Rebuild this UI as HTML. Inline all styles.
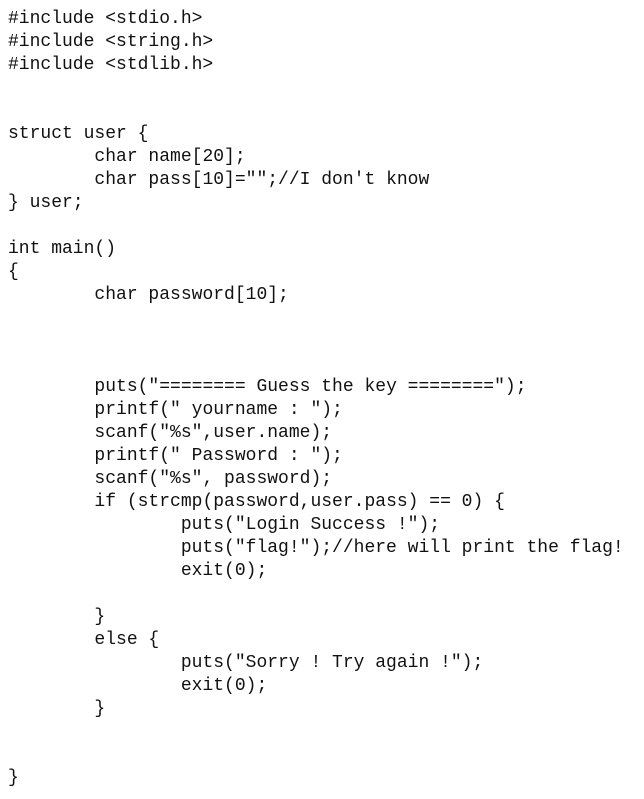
<!DOCTYPE html>
<html><head><style>
body{margin:0;background:#fff;width:644px;height:799px;overflow:hidden}
pre{margin:0;position:absolute;left:8px;top:8px;font-family:"Liberation Mono",monospace;font-size:18px;line-height:23px;color:#111;tab-size:8}
</style></head><body><pre>#include &lt;stdio.h&gt;
#include &lt;string.h&gt;
#include &lt;stdlib.h&gt;


struct user {
	char name[20];
	char pass[10]="";//I don't know
} user;

int main()
{
	char password[10];



	puts("======== Guess the key ========");
	printf(" yourname : ");
	scanf("%s",user.name);
	printf(" Password : ");
	scanf("%s", password);
	if (strcmp(password,user.pass) == 0) {
		puts("Login Success !");
		puts("flag!");//here will print the flag!
		exit(0);

	}
	else {
		puts("Sorry ! Try again !");
		exit(0);
	}


}</pre></body></html>
